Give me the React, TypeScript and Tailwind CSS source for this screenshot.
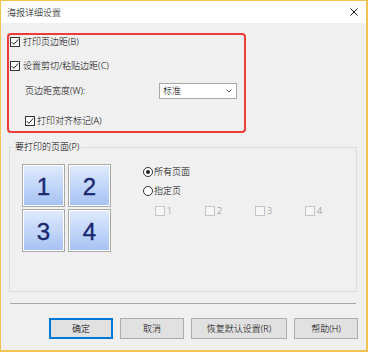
import React from "react";

function Check({ checked = false, disabled = false }: { checked?: boolean; disabled?: boolean }) {
  return (
    <span
      className={`flex h-[10px] w-[10px] shrink-0 items-center justify-center border ${
        disabled ? "border-[#c4c4c4] bg-[#f6f6f6]" : "border-[#333333] bg-white"
      }`}
    >
      {checked && (
        <svg width="8" height="8" viewBox="0 0 8 8">
          <path d="M0.8 4.2 L2.9 6.3 L7.2 1.4" stroke="#222" strokeWidth="1" fill="none" />
        </svg>
      )}
    </span>
  );
}

function Radio({ checked = false }: { checked?: boolean }) {
  return (
    <span className="flex h-[10px] w-[10px] shrink-0 items-center justify-center rounded-full border border-[#333333] bg-white">
      {checked && <span className="h-[4px] w-[4px] rounded-full bg-[#222]" />}
    </span>
  );
}

function Tile({ n }: { n: string }) {
  return (
    <div className="h-[43px] w-[43px] border border-[#a9a9a9] bg-white p-[1px]">
      <div className="flex h-full w-full items-center justify-center bg-linear-to-b from-[#dfeafc] to-[#a6c3f4] pt-[2px] font-['Liberation_Sans',Arial,sans-serif] text-[24px] font-normal leading-none text-[#1a2870] [-webkit-text-stroke:0.4px_#1a2870]">
        {n}
      </div>
    </div>
  );
}

function Btn({ label, w, primary = false }: { label: string; w: string; primary?: boolean }) {
  return (
    <div
      className={`flex h-[21px] items-center justify-center bg-[#e1e1e1] text-[9px] ${w} ${
        primary ? "border-2 border-[#0078d7]" : "border border-[#adadad]"
      }`}
    >
      {label}
    </div>
  );
}

export default function App() {
  return (
    <div className="flex h-[352px] w-[368px] flex-col border-t border-r-2 border-b-2 border-l border-[#f2c44f] font-['Noto_Sans','Noto_Sans_CJK_SC',sans-serif] text-[9px] font-light leading-[12px] text-black">
      {/* title bar */}
      <div className="flex h-[22px] shrink-0 items-center justify-between bg-white pl-[6px] pr-[8px]">
        <span className="pt-[1px]">海报详细设置</span>
        <svg width="8" height="8" viewBox="0 0 8 8" className="mt-[-1px]">
          <path d="M0.5 0.5 L7.5 7.5 M7.5 0.5 L0.5 7.5" stroke="#111" strokeWidth="1" />
        </svg>
      </div>

      {/* body */}
      <div className="flex flex-1 flex-col bg-[#f0f0f0]">
        {/* red highlighted box */}
        <div className="ml-[6px] mt-[10px] flex h-[100px] w-[239px] flex-col rounded-[4px] border-2 border-[#ee3b3b]">
          <div className="flex h-[14px] items-center gap-[3px] pl-[1px]">
            <Check checked />
            <span>打印页边距(B)</span>
          </div>
          <div className="mt-[10px] flex h-[14px] items-center gap-[3px] pl-[1px]">
            <Check checked />
            <span>设置剪切/粘贴边距(C)</span>
          </div>
          <div className="mt-[10px] flex h-[16px] items-center pl-[16px]">
            <span className="w-[134px]">页边距宽度(W):</span>
            <div className="flex h-[16px] w-[78px] items-center justify-between border border-[#a8a8a8] bg-white pl-[3px] pr-[4px]">
              <span>标准</span>
              <svg width="6" height="4" viewBox="0 0 6 4">
                <path d="M0.5 0.5 L3 3 L5.5 0.5" stroke="#555" strokeWidth="1" fill="none" />
              </svg>
            </div>
          </div>
          <div className="mt-[15px] flex h-[14px] items-center gap-[2px] pl-[16px]">
            <Check checked />
            <span>打印对齐标记(A)</span>
          </div>
        </div>

        {/* group box */}
        <fieldset className="ml-[8px] mt-[8px] h-[151px] w-[348px] border border-[#dcdcdc]">
          <legend className="ml-[3px] px-[2px] leading-[12px]">要打印的页面(P)</legend>
          <div className="mt-[11px] flex">
            <div className="ml-[12px] grid grid-cols-2 gap-x-[3px] gap-y-[2px]">
              <Tile n="1" />
              <Tile n="2" />
              <Tile n="3" />
              <Tile n="4" />
            </div>
            <div className="ml-[32px] flex flex-col">
              <div className="mt-[2px] flex h-[12px] items-center gap-[1px]">
                <Radio checked />
                <span>所有页面</span>
              </div>
              <div className="mt-[7px] flex h-[12px] items-center gap-[1px]">
                <Radio />
                <span>指定页</span>
              </div>
              <div className="mt-[8px] flex h-[12px] items-center pl-[12px] text-[#8f8f8f]">
                {["1", "2", "3", "4"].map((n) => (
                  <div key={n} className="flex w-[50px] items-center gap-[2px]">
                    <Check disabled />
                    <span>{n}</span>
                  </div>
                ))}
              </div>
            </div>
          </div>
        </fieldset>

        {/* separator */}
        <div className="ml-[9px] mt-[11px] h-[1px] w-[346px] bg-[#a8a8a8]" />

        {/* buttons */}
        <div className="ml-[48px] mt-[14px] flex gap-[7px]">
          <Btn label="确定" w="w-[64px]" primary />
          <Btn label="取消" w="w-[64px]" />
          <Btn label="恢复默认设置(R)" w="w-[96px]" />
          <Btn label="帮助(H)" w="w-[64px]" />
        </div>
      </div>
    </div>
  );
}
